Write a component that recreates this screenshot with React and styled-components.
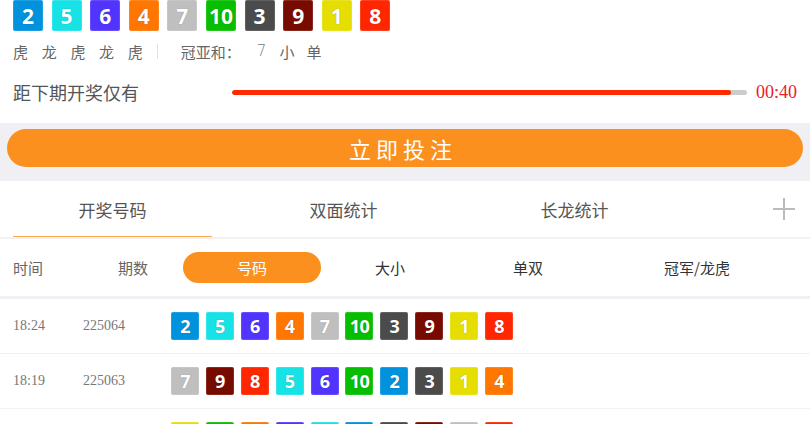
import React from "react";
import styled, { createGlobalStyle } from "styled-components";

const GlobalStyle = createGlobalStyle`
  html, body {
    margin: 0;
    padding: 0;
    overflow: hidden;
    background: #fff;
  }
  body {
    font-family: "Noto Sans CJK SC", "Noto Sans", sans-serif;
  }
`;

const BALL_COLORS = {
  1: "#e6de00",
  2: "#0092dd",
  3: "#4b4b4b",
  4: "#ff7600",
  5: "#17e2e5",
  6: "#5234ff",
  7: "#bfbfbf",
  8: "#ff2600",
  9: "#780b00",
  10: "#07bf00",
};

const latest = [2, 5, 6, 4, 7, 10, 3, 9, 1, 8];

const history = [
  { time: "18:24", issue: "225064", nums: [2, 5, 6, 4, 7, 10, 3, 9, 1, 8] },
  { time: "18:19", issue: "225063", nums: [7, 9, 8, 5, 6, 10, 2, 3, 1, 4] },
  { time: "18:14", issue: "225062", nums: [1, 10, 4, 6, 5, 2, 3, 9, 7, 8] },
];

const Page = styled.div`
  width: 810px;
  display: flex;
  flex-direction: column;
`;

const Summary = styled.section`
  display: flex;
  flex-direction: column;
  padding: 0 13px 10px;
`;

const BallRow = styled.div`
  display: flex;
  align-items: center;
  gap: ${(p) => (p.$big ? "8.6px" : "6.9px")};
`;

const Ball = styled.span`
  width: ${(p) => (p.$big ? "30px" : "28px")};
  height: ${(p) => (p.$big ? "31px" : "28px")};
  border-radius: 2px;
  background: ${(p) => p.$color};
  color: #fff;
  display: flex;
  align-items: center;
  justify-content: center;
  font-family: "Open Sans", "Noto Sans", sans-serif;
  font-weight: 700;
  font-size: ${(p) => (p.$big ? "21px" : "18px")};
  letter-spacing: ${(p) => (p.$big ? "0" : "-0.6px")};
  text-shadow: 0 0 1px rgba(0, 0, 0, 0.35);
  box-shadow: inset 0 0 0 1px rgba(255, 255, 255, 0.12);
`;

const InfoRow = styled.div`
  height: 40px;
  display: flex;
  align-items: center;
  font-size: 15px;
  color: #666;
`;

const Chars = styled.div`
  display: flex;
  gap: ${(p) => p.$gap || "13.7px"};
`;

const Divider = styled.span`
  width: 1px;
  height: 15px;
  background: #e2e2e2;
  margin: 0 23px 0 14px;
`;

const SumValue = styled.span`
  font-family: "DejaVu Sans", sans-serif;
  font-weight: 300;
  color: #777;
  margin-left: 16px;
  margin-right: 13px;
`;

const CountdownRow = styled.div`
  height: 42px;
  display: flex;
  align-items: center;
`;

const CountdownLabel = styled.span`
  width: 219px;
  font-size: 18px;
  color: #555;
`;

const Track = styled.div`
  flex: 1;
  height: 5px;
  border-radius: 3px;
  background: #cccccc;
  overflow: hidden;
`;

const Fill = styled.div`
  height: 100%;
  background: #ff2a00;
  border-radius: 3px;
`;

const Timer = styled.span`
  margin-left: 9px;
  font-family: "Liberation Serif", serif;
  font-size: 18px;
  color: #e8202a;
`;

const BetBand = styled.div`
  background: #efeff4;
  padding: 6px 7px 14px;
`;

const BetButton = styled.button`
  width: 100%;
  height: 38px;
  border: none;
  border-radius: 19px;
  background: #fb901e;
  color: #fff;
  font-family: "Noto Sans CJK SC", sans-serif;
  font-size: 22px;
  letter-spacing: 5px;
  padding: 0 4px 0 0;
  display: flex;
  align-items: center;
  justify-content: center;
`;

const Tabs = styled.nav`
  height: 56px;
  display: flex;
  align-items: stretch;
  border-bottom: 2px solid #f2f2f4;
`;

const Tab = styled.div`
  position: relative;
  width: 231px;
  padding-right: 6px;
  box-sizing: border-box;
  display: flex;
  align-items: center;
  justify-content: center;
  font-size: 17px;
  color: #555;
  &::after {
    content: "";
    display: ${(p) => (p.$active ? "block" : "none")};
    position: absolute;
    left: 13px;
    right: 19px;
    bottom: 0;
    height: 1.5px;
    background: #ffa94d;
  }
`;

const AddButton = styled.div`
  margin-left: auto;
  padding-right: 15px;
  display: flex;
  align-items: center;
`;

const SubTabs = styled.div`
  height: 57px;
  display: grid;
  grid-template-columns: 70px 100px 138px 138px 138px 200px;
  align-items: center;
  padding: 0 13px;
  border-bottom: 3px solid #f1f1f5;
  font-size: 15px;
`;

const SubTab = styled.div`
  display: flex;
  align-items: center;
  justify-content: ${(p) => (p.$left ? "flex-start" : "center")};
  height: 31px;
  border-radius: 16px;
  color: ${(p) => (p.$active ? "#fff" : p.$muted ? "#666" : "#333")};
  background: ${(p) => (p.$active ? "#fb901e" : "transparent")};
`;

const Row = styled.div`
  height: 54px;
  display: flex;
  align-items: center;
  padding: 0 13px;
  border-bottom: 1px solid #f2f2f2;
`;

const Cell = styled.span`
  width: ${(p) => p.$w};
  font-family: "Liberation Serif", serif;
  font-size: 14px;
  color: #777;
`;

const PlusIcon = () => (
  <svg width="22" height="22" viewBox="0 0 22 22">
    <path d="M11 0v22M0 11h22" stroke="#bbbbbb" strokeWidth="2" />
  </svg>
);

export default function App() {
  return (
    <Page>
      <GlobalStyle />
      <Summary>
        <BallRow $big>
          {latest.map((n, i) => (
            <Ball key={i} $big $color={BALL_COLORS[n]}>
              {n}
            </Ball>
          ))}
        </BallRow>
        <InfoRow>
          <Chars>
            {["虎", "龙", "虎", "龙", "虎"].map((c, i) => (
              <span key={i}>{c}</span>
            ))}
          </Chars>
          <Divider />
          <span>冠亚和：</span>
          <SumValue>7</SumValue>
          <Chars $gap="12px">
            <span>小</span>
            <span>单</span>
          </Chars>
        </InfoRow>
        <CountdownRow>
          <CountdownLabel>距下期开奖仅有</CountdownLabel>
          <Track>
            <Fill style={{ width: "96.9%" }} />
          </Track>
          <Timer>00:40</Timer>
        </CountdownRow>
      </Summary>

      <BetBand>
        <BetButton>立即投注</BetButton>
      </BetBand>

      <Tabs>
        <Tab $active>开奖号码</Tab>
        <Tab>双面统计</Tab>
        <Tab>长龙统计</Tab>
        <AddButton>
          <PlusIcon />
        </AddButton>
      </Tabs>

      <SubTabs>
        <SubTab $left $muted>时间</SubTab>
        <SubTab $muted>期数</SubTab>
        <SubTab $active>号码</SubTab>
        <SubTab>大小</SubTab>
        <SubTab>单双</SubTab>
        <SubTab>冠军/龙虎</SubTab>
      </SubTabs>

      {history.map((row) => (
        <Row key={row.issue}>
          <Cell $w="70px">{row.time}</Cell>
          <Cell $w="88px">{row.issue}</Cell>
          <BallRow>
            {row.nums.map((n, i) => (
              <Ball key={i} $color={BALL_COLORS[n]}>
                {n}
              </Ball>
            ))}
          </BallRow>
        </Row>
      ))}
    </Page>
  );
}
